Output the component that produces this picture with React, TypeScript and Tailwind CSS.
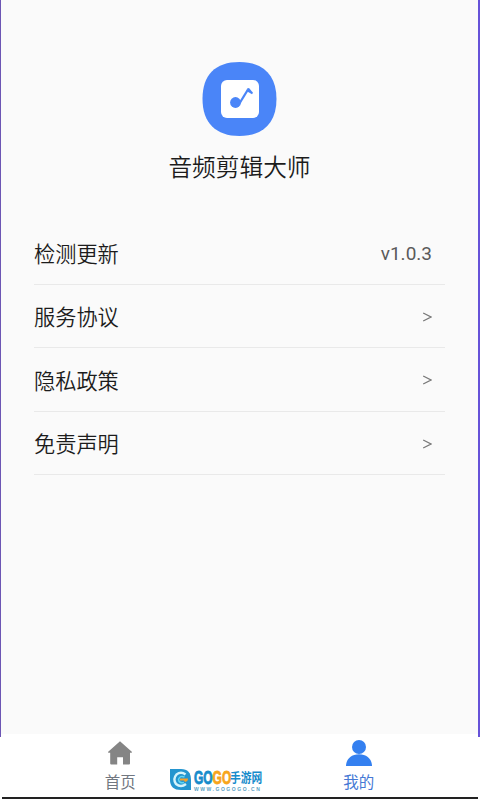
type MenuItem = {
  label: string;
  version?: string;
};

const menuItems: MenuItem[] = [
  { label: "检测更新", version: "v1.0.3" },
  { label: "服务协议" },
  { label: "隐私政策" },
  { label: "免责声明" },
];

const AppLogo = () => (
  <svg width="76" height="76" viewBox="1 0 76 76">
    <path
      d="M38.5 1C62 1 75.5 14 75.5 38S62 75 38.5 75 1.5 62 1.5 38 14 1 38.5 1Z"
      fill="#4a85f8"
    />
    <rect x="20" y="19" width="38" height="38" rx="6" fill="#fff" />
    <circle cx="34.5" cy="41.5" r="5.4" fill="#4a85f8" />
    <path
      d="M38.4 42.5L47 28.5"
      fill="none"
      stroke="#4a85f8"
      strokeWidth="2.3"
    />
    <path d="M46 27.5L48 27L52 31.7L51 33.2L46.7 30.8Z" fill="#4a85f8" />
  </svg>
);

const HomeIcon = () => (
  <svg width="26" height="26" viewBox="0 0 26 26" fill="#858585">
    <path d="M13 1.3L24.8 11.7Q25.3 12.8 24 12.8H23V23.5Q23 24.6 22 24.6H16V17.3H10.2V24.6H4.2Q3.2 24.6 3.2 23.5V12.8H2Q.7 12.8 1.2 11.7Z" />
  </svg>
);

const UserIcon = () => (
  <svg width="28" height="28" viewBox="0 0 28 28" fill="#3480f0">
    <circle cx="14" cy="8" r="7" />
    <path d="M1 27C1 20.5 6 15.3 14 15.3S27 20.5 27 27Z" />
  </svg>
);

const Watermark = () => (
  <div className="absolute left-[168px] top-[32px] flex gap-[2px]">
    <svg width="22" height="22" viewBox="0 0 22 22" className="shrink-0">
      <path d="M0 0H11Q21 0 21 11V21H11Q0 21 0 11Z" fill="#2495cf" />
      <path d="M15.5 5.5Q11 2 6.5 5.5 2.5 10 6 15 11 19 16 15" fill="none" stroke="#d4f3fb" strokeWidth="2.4" />
      <path d="M14.5 8Q10 6 8.5 10.5 9 14.5 14 13.5" fill="none" stroke="#62d6f3" strokeWidth="1.5" />
      <path d="M10 9.5H18Q18 12.5 15 13L14 11.5H10Z" fill="#f5a22c" />
    </svg>
    <div className="w-[69px] pt-px">
      <div className="flex h-4 items-center whitespace-nowrap font-black text-[#168bcb]">
        <span className="flex w-[36px] origin-left scale-x-[0.63] font-['Liberation_Sans',sans-serif] text-[19px] leading-4 [-webkit-text-stroke:0.9px]">
          <span>GO</span>
          <span className="text-[#f7a51c]">GO</span>
        </span>
        <span className="origin-left scale-x-[0.84] text-[12.8px] font-bold leading-4">手游网</span>
      </div>
      <div className="mt-px whitespace-nowrap font-['Liberation_Sans',sans-serif] text-[5px] font-bold leading-[5px] tracking-[1.55px] text-[#5b9fc4]">
        WWW.GOGOGO.CN
      </div>
    </div>
  </div>
);

const App = () => {
  return (
    <div className="relative flex h-[800px] w-[480px] flex-col overflow-hidden bg-white font-['Roboto','Noto_Sans_CJK_SC',sans-serif]">
      <div className="flex h-[737px] shrink-0 flex-col border-l border-r-2 border-l-[#6c56b4] border-r-[#6652d8]">
        <main className="h-[734px] bg-[#fafafa] pl-[33px] pr-[33px]">
          <div className="flex flex-col items-center pt-[61px]">
            <AppLogo />
            <h1 className="mt-[13px] h-9 text-[23.7px] font-[350] leading-9 text-[#1c1c1c]">音频剪辑大师</h1>
          </div>

          <ul className="mt-[35px]">
            {menuItems.map((item) => (
              <li
                key={item.label}
                className="flex h-[63.5px] items-center justify-between border-b border-[#e9e9e9] pr-[13px] pt-[5px]"
              >
                <span className="text-[21.2px] font-[350] leading-8 text-[#1c1c1c]">{item.label}</span>
                {item.version ? (
                  <span className="mb-px text-[19px] leading-8 text-[#5a5a5a]">{item.version}</span>
                ) : (
                  <svg width="10" height="10" viewBox="0 0 10 10" className="mb-[3px]">
                    <path d="M1.2 1L9 5L1.2 9" fill="none" stroke="#777" strokeWidth="1.2" />
                  </svg>
                )}
              </li>
            ))}
          </ul>
        </main>
      </div>

      <nav className="relative mx-[2px] flex h-[62px] shrink-0 border-b-2 border-[#222]">
        <div className="flex flex-1 flex-col items-center pt-[3px] pr-[2px]">
          <HomeIcon />
          <span className="mt-[7px] text-[15.5px] leading-5 text-[#717780]">首页</span>
        </div>
        <div className="flex flex-1 flex-col items-center pt-[2px] pr-px">
          <UserIcon />
          <span className="mt-1.5 text-[15.5px] leading-5 text-[#4679d5]">我的</span>
        </div>
        <Watermark />
      </nav>
    </div>
  );
};

export default App;
